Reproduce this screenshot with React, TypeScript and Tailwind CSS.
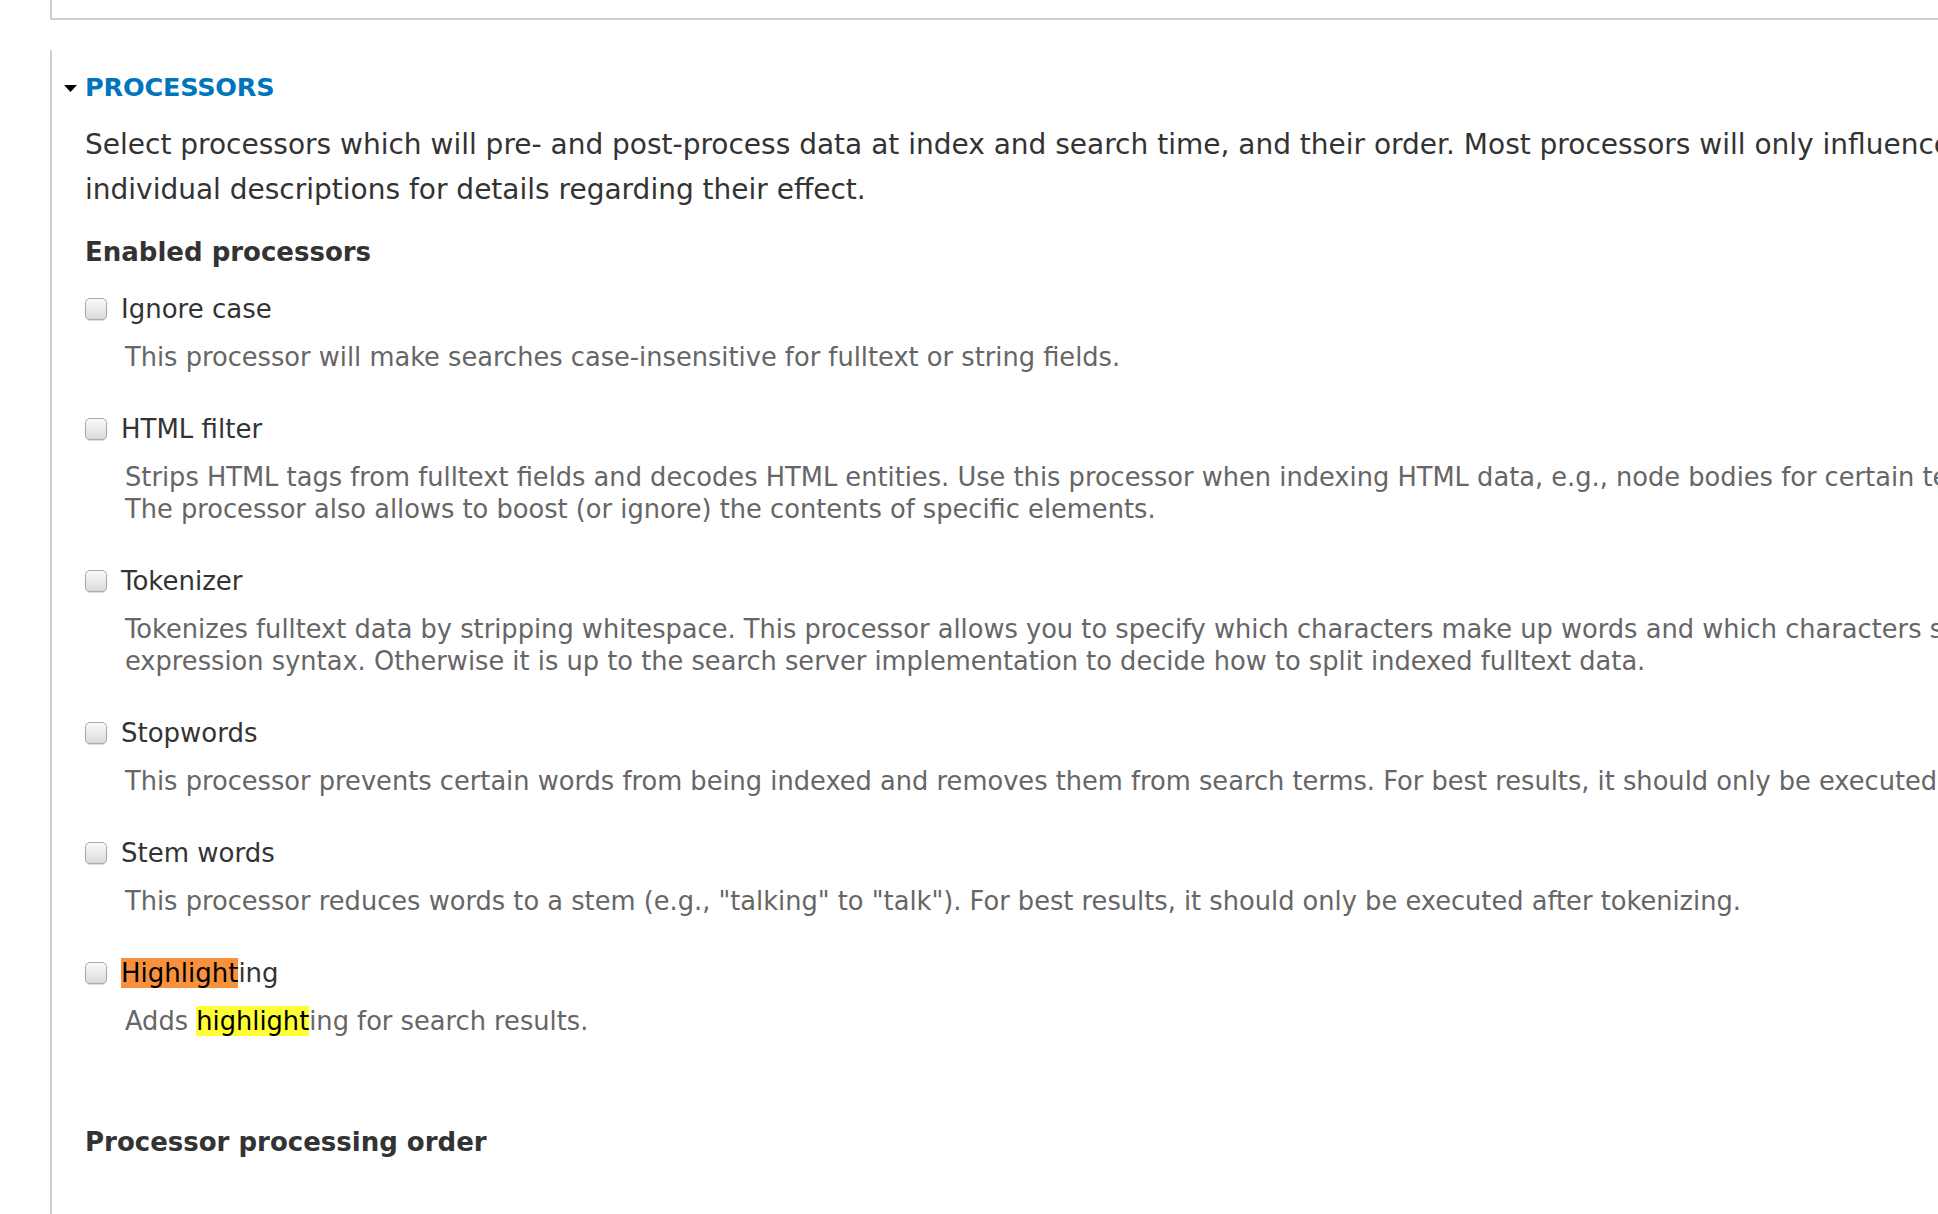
import React from 'react';

interface ProcessorProps {
    label: React.ReactNode;
    lines: React.ReactNode[];
}

const Checkbox: React.FC = () => (
    <span className="w-[22px] h-[22px] shrink-0 rounded-[5px] border border-[#a9a9a9] bg-gradient-to-b from-[#fafafa] to-[#dcdcdc] shadow-[0_1px_1px_rgba(0,0,0,0.15)]" />
);

const Processor: React.FC<ProcessorProps> = ({ label, lines }) => (
    <div className="flex flex-col">
        <div className="flex items-center h-[32px]">
            <Checkbox />
            <span className="ml-[14px] text-[26px] text-[#333] leading-[32px]">{label}</span>
        </div>
        {/* description, one block per visual line */}
        <div className="mt-[16px] pl-[40px] text-[25.7px] leading-[32px] text-[#666] whitespace-nowrap">
            {lines.map((line, i) => (
                <div key={i}>{line}</div>
            ))}
        </div>
    </div>
);

export default function App() {
    const processors: ProcessorProps[] = [
        {
            label: 'Ignore case',
            lines: ['This processor will make searches case-insensitive for fulltext or string fields.']
        },
        {
            label: 'HTML filter',
            lines: [
                'Strips HTML tags from fulltext fields and decodes HTML entities. Use this processor when indexing HTML data, e.g., node bodies for certain text formats.',
                'The processor also allows to boost (or ignore) the contents of specific elements.'
            ]
        },
        {
            label: 'Tokenizer',
            lines: [
                'Tokenizes fulltext data by stripping whitespace. This processor allows you to specify which characters make up words and which characters should be ignored, using regular',
                'expression syntax. Otherwise it is up to the search server implementation to decide how to split indexed fulltext data.'
            ]
        },
        {
            label: 'Stopwords',
            lines: [
                'This processor prevents certain words from being indexed and removes them from search terms. For best results, it should only be executed after tokenizing.'
            ]
        },
        {
            label: 'Stem words',
            lines: [
                'This processor reduces words to a stem (e.g., "talking" to "talk"). For best results, it should only be executed after tokenizing.'
            ]
        },
        {
            label: (
                <>
                    <span className="bg-[#f8903c] text-black">Highlight</span>ing
                </>
            ),
            lines: [
                <>
                    Adds <span className="bg-[#ffff33] text-black">highlight</span>ing for search results.
                </>
            ]
        }
    ];

    return (
        <div className="w-full min-h-[1214px] bg-white overflow-hidden font-['DejaVu_Sans',sans-serif]">
            {/* previous fieldset, cut off at the top */}
            <div className="ml-[50px] h-[20px] border-l-2 border-b-2 border-[#d0d0d0]" />

            <div className="ml-[50px] mt-[30px] border-l-2 border-[#d0d0d0] pt-[21px] pl-[33px] pb-[40px] min-h-[1164px]">
                <div className="flex items-center h-[32px] -ml-[21px]">
                    <svg width="13" height="7" viewBox="0 0 13 7" className="mr-[8px] mt-[2px]">
                        <path d="M0 0 L13 0 L6.5 7 Z" fill="#000" />
                    </svg>
                    <span className="text-[25.5px] font-bold text-[#0074bd] leading-[32px] tracking-[-0.2px]">PROCESSORS</span>
                </div>

                <div className="mt-[19px] text-[28px] leading-[45px] text-[#333] whitespace-nowrap">
                    <div>
                        Select processors which will pre- and post-process data at index and search time, and their order. Most processors will only influence fulltext fields. See the
                    </div>
                    <div>individual descriptions for details regarding their effect.</div>
                </div>

                <h3 className="mt-[24px] text-[26px] font-bold leading-[32px] text-[#333]">Enabled processors</h3>

                <div className="mt-[25px] flex flex-col gap-[40px]">
                    {processors.map((p, i) => (
                        <Processor key={i} label={p.label} lines={p.lines} />
                    ))}
                </div>

                <h3 className="mt-[89px] text-[26px] font-bold leading-[32px] text-[#333]">Processor processing order</h3>
            </div>
        </div>
    );
}
